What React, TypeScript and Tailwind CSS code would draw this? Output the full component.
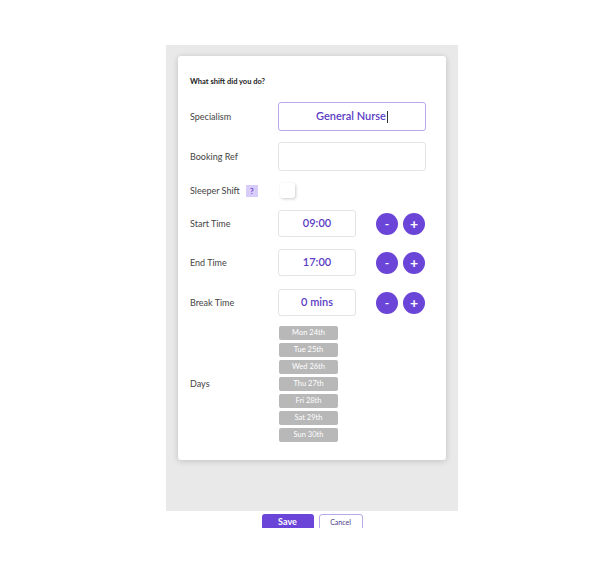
import { useState } from 'react'

const days = ['Mon 24th', 'Tue 25th', 'Wed 26th', 'Thu 27th', 'Fri 28th', 'Sat 29th', 'Sun 30th']

function Stepper() {
  return (
    <div className="ml-[20px] flex gap-[5px]">
      <button className="flex h-[22px] w-[22px] items-center justify-center rounded-full bg-[#6b45d8] text-[12px] font-bold leading-none text-white">
        -
      </button>
      <button className="flex h-[22px] w-[22px] items-center justify-center rounded-full bg-[#6b45d8] text-[14px] font-bold leading-none text-white">
        +
      </button>
    </div>
  )
}

function TimeRow({ label, value, className }: { label: string; value: string; className?: string }) {
  return (
    <div className={`flex items-center ${className ?? ''}`}>
      <span className="w-[88px] text-[9px] text-[#444]">{label}</span>
      <div className="flex h-[27px] w-[78px] items-center justify-center rounded-[3px] border border-[#e4e4e4] bg-white text-[11px] font-semibold text-[#5b3cc4]">
        {value}
      </div>
      <Stepper />
    </div>
  )
}

export default function App() {
  const [sleeper, setSleeper] = useState(false)

  return (
    <div className="h-[570px] w-[614px] bg-white" style={{ fontFamily: 'Lato, "Open Sans", sans-serif' }}>
      <div className="pl-[166px] pt-[45px]">
        <div className="h-[466px] w-[292px] bg-[#e9e9e9] pl-[12px] pt-[11px]">
          <div className="h-[404px] w-[268px] rounded-[3px] bg-white pl-[12px] pt-[22px] shadow-[0_1px_6px_rgba(0,0,0,0.18)]">
            <p className="text-[7.5px] font-bold leading-[8px] text-[#222]">What shift did you do?</p>

            <div className="mt-[16px] flex items-center">
              <span className="w-[88px] text-[9px] text-[#444]">Specialism</span>
              <div className="flex h-[29px] w-[148px] items-center justify-center rounded-[3px] border border-[#b9a8ea] text-[11px] font-semibold text-[#5b3cc4]">
                General Nurse<span className="ml-[1px] inline-block h-[12px] w-[1px] bg-[#333]" />
              </div>
            </div>

            <div className="mt-[11px] flex items-center">
              <span className="w-[88px] text-[9px] text-[#444]">Booking Ref</span>
              <div className="h-[29px] w-[148px] rounded-[3px] border border-[#e4e4e4]" />
            </div>

            <div className="mt-[12px] flex items-center">
              <div className="flex w-[90px] items-center">
                <span className="text-[9px] text-[#444]">Sleeper Shift</span>
                <span className="ml-[6px] flex h-[12px] w-[12px] items-center justify-center bg-[#d8cdf8] text-[8px] font-bold text-[#6b45d8]">
                  ?
                </span>
              </div>
              <button
                onClick={() => setSleeper(!sleeper)}
                className="h-[15px] w-[15px] rounded-[3px] bg-white shadow-[1px_1px_3px_rgba(0,0,0,0.2)]"
              />
            </div>

            <TimeRow label="Start Time" value="09:00" className="mt-[12px]" />
            <TimeRow label="End Time" value="17:00" className="mt-[12px]" />
            <TimeRow label="Break Time" value="0 mins" className="mt-[13px]" />

            <div className="mt-[10px] flex items-center">
              <span className="w-[89px] text-[9px] text-[#444]">Days</span>
              <div className="flex flex-col gap-[3px]">
                {days.map((d) => (
                  <div
                    key={d}
                    className="flex h-[14px] w-[59px] items-center justify-center rounded-[2px] bg-[#b8b8b8] text-[7.5px] text-white"
                  >
                    {d}
                  </div>
                ))}
              </div>
            </div>
          </div>
        </div>
      </div>

      <div className="flex h-[17px] items-start justify-center gap-[5px] overflow-hidden pl-[10px] pt-[3px]">
        <button className="h-[16px] w-[52px] rounded-t-[3px] bg-[#6b45d8] text-[9px] font-bold text-white">Save</button>
        <button className="h-[16px] w-[44px] rounded-t-[3px] border border-[#b9a8ea] bg-white text-[7px] text-[#4a3a8a]">
          Cancel
        </button>
      </div>
    </div>
  )
}
